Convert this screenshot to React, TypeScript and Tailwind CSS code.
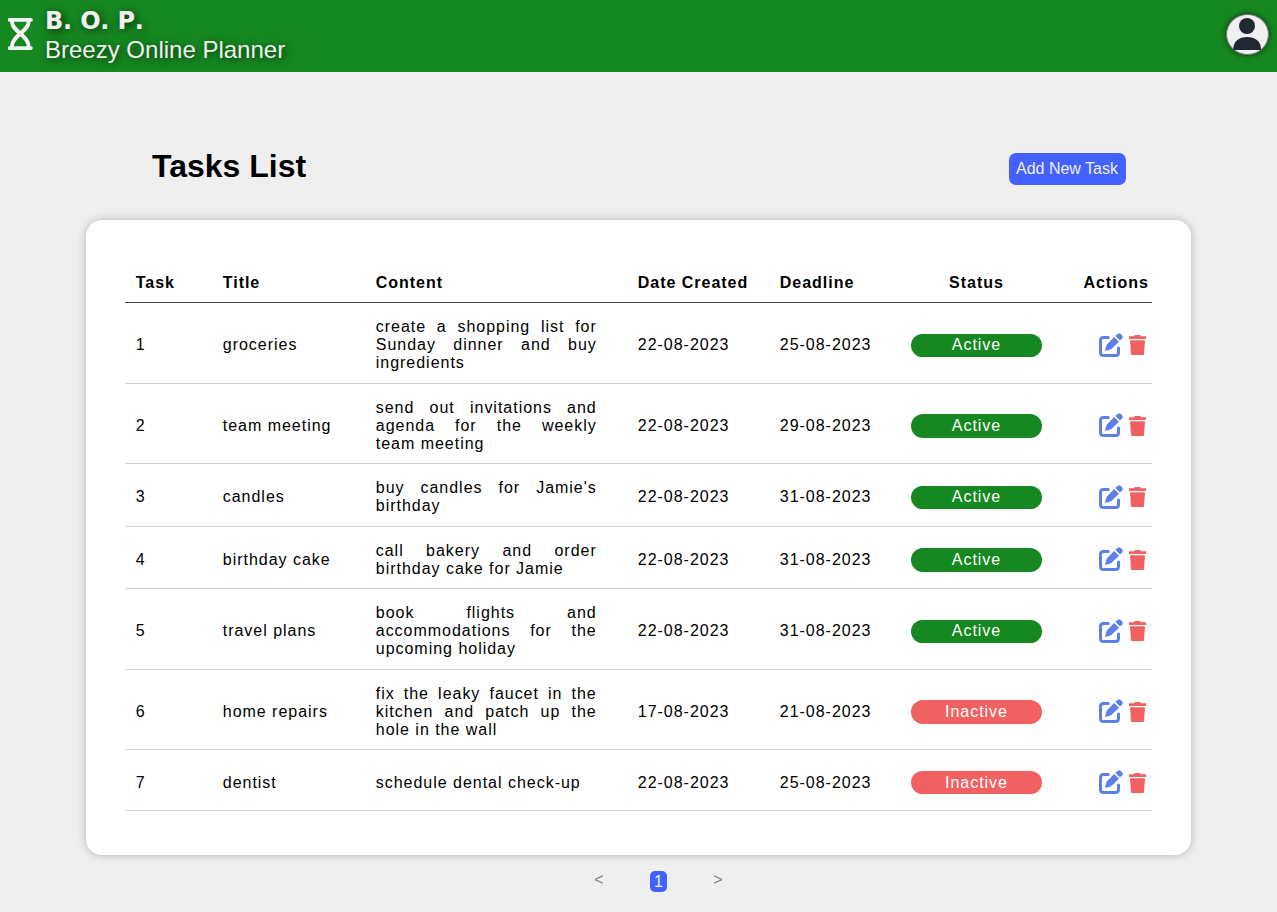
import React from "react";

type Task = {
  id: number;
  title: string;
  content: string;
  created: string;
  deadline: string;
  active: boolean;
  row: string;
  pill: string;
  actions: string;
  trash: string;
};

const odd = { pill: "mt-[2px] h-[23px] pt-[2px]", actions: "mt-px", trash: "" };
const even = { pill: "mt-px h-[24px] pt-[3px]", actions: "mt-[-1px]", trash: "mt-px mb-[-1px]" };
const last = { pill: "mt-[-1px] h-[23px] pt-[3px]", actions: "mt-[-2px]", trash: "mt-px mb-[-1px]" };

const tasks: Task[] = [
  { id: 1, title: "groceries", content: "create a shopping list for Sunday dinner and buy ingredients", created: "22-08-2023", deadline: "25-08-2023", active: true, row: "h-[81px] pt-[3px]", ...odd },
  { id: 2, title: "team meeting", content: "send out invitations and agenda for the weekly team meeting", created: "22-08-2023", deadline: "29-08-2023", active: true, row: "h-[80px] pt-[4px]", ...even },
  { id: 3, title: "candles", content: "buy candles for Jamie's birthday", created: "22-08-2023", deadline: "31-08-2023", active: true, row: "h-[63px] pt-[3px]", ...odd },
  { id: 4, title: "birthday cake", content: "call bakery and order birthday cake for Jamie", created: "22-08-2023", deadline: "31-08-2023", active: true, row: "h-[62px] pt-[4px]", ...even },
  { id: 5, title: "travel plans", content: "book flights and accommodations for the upcoming holiday", created: "22-08-2023", deadline: "31-08-2023", active: true, row: "h-[81px] pt-[3px]", ...odd },
  { id: 6, title: "home repairs", content: "fix the leaky faucet in the kitchen and patch up the hole in the wall", created: "17-08-2023", deadline: "21-08-2023", active: false, row: "h-[80px] pt-[4px]", ...even },
  { id: 7, title: "dentist", content: "schedule dental check-up", created: "22-08-2023", deadline: "25-08-2023", active: false, row: "h-[61px] pt-[6px]", ...last },
];

const columns = "grid grid-cols-[87px_153px_262px_142px_131.25px_131px_110px] pl-[10.75px]";

function HourglassIcon() {
  return (
    <svg viewBox="0 0 25 32" className="mt-[-4px] h-8 w-[25px]" fill="none" stroke="#f4f4f4">
      <path d="M1.500 1.900H23M1.500 30.100H23" strokeWidth="3.600" strokeLinecap="round" />
      <path d="M4 2V4C4 13 20.600 18 20.600 28V30M20.600 2V4C20.600 13 4 18 4 28V30" strokeWidth="3.900" />
    </svg>
  );
}

function EditIcon() {
  return (
    <svg viewBox="0 0 24 24" className="size-6" fill="#5c80e8">
      <path d="M9.200 4.500H4.500Q1.500 4.500 1.500 7.500V19.500Q1.500 22.500 4.500 22.500H16.500Q19.500 22.500 19.500 19.500V15" fill="none" stroke="#5c80e8" strokeWidth="3" strokeLinecap="round" />
      <path d="M6 18L7.100 13.200Q7.500 11.700 8.500 10.700L15.200 4L20 8.800L13.200 15.300Q12.200 16.300 10.800 16.700Z" />
      <path d="M16.400 3L18.800 .7Q20.200-.3 21.600 .8L23.200 2.400Q24.300 3.800 23.300 5.200L21 7.600Z" />
    </svg>
  );
}

function TrashIcon({ className }: { className: string }) {
  return (
    <svg viewBox="0 0 17 24" className={`h-6 w-[17px] ${className}`} fill="#f16161">
      <path d="M0 3.200H5L5.700 2H11.300L12 3.200H17V6H0Z" />
      <path d="M1 7.200H16L15 21Q14.900 22 14 22H3Q2.100 22 2 21Z" />
    </svg>
  );
}

function Header() {
  return (
    <header className="flex h-[72px] items-center justify-between bg-[#168821] px-2 text-[#efefef]">
      <div className="flex items-center">
        <HourglassIcon />
        <div className="ml-[12px] [text-shadow:2px_2px_8px_#000000b0]">
          <div className="h-[28px] pt-px font-['DejaVu_Sans',sans-serif] text-[24px] leading-[28px] font-bold tracking-[-0.2px] [font-kerning:none]">B. O. P.</div>
          <div className="h-[32px] text-[24px] leading-[32px]">Breezy Online Planner</div>
        </div>
      </div>
      <div className="mt-[-3px] h-[41px] w-[43px] rounded-[50%] border border-[#777] bg-[#efefef] shadow-[0_0_6px_#000000a0]">
        <svg viewBox="0 0 41 39" className="h-[39px] w-[41px]" fill="#212831">
          <circle cx="20" cy="11" r="8" />
          <path d="M6.300 35V33.500C6.800 26 12 22 20.100 22S33.500 26 34 33.500V35Z" />
        </svg>
      </div>
    </header>
  );
}

function Row({ task }: { task: Task }) {
  return (
    <div className={`${columns} ${task.row} items-center border-b border-[#d0d3d4]`}>
      <span>{task.id}</span>
      <span>{task.title}</span>
      <p className="w-[221px] text-justify">{task.content}</p>
      <span>{task.created}</span>
      <span>{task.deadline}</span>
      <span className={`rounded-full text-center text-white ${task.pill} ${task.active ? "bg-[#168821]" : "bg-[#f16161]"}`}>
        {task.active ? "Active" : "Inactive"}
      </span>
      <div className={`flex h-6 items-start justify-end gap-[6px] pr-[6px] ${task.actions}`}>
        <EditIcon />
        <TrashIcon className={task.trash} />
      </div>
    </div>
  );
}

export default function App() {
  return (
    <div className="h-[912px] overflow-hidden bg-[#efefef] font-['Liberation_Sans',sans-serif] text-base text-black">
      <Header />
      <main className="flex flex-col px-[86px]">
        <div className="flex h-[148px] items-start justify-between pr-[65px] pl-[66px]">
          <h1 className="pt-[76px] text-[32px] leading-[37px] font-bold">Tasks List</h1>
          <button className="mt-[81px] h-8 w-[117px] rounded-[7px] bg-[#4361ff] pr-px text-[#efefef]">Add New Task</button>
        </div>
        <section className="h-[635px] rounded-[16px] bg-white px-[39px] pt-[40px] leading-[18px] tracking-[0.98px] shadow-[0_0_10px_#00000040]">
          <div className={`${columns} h-[43px] items-center border-b border-[#444] pt-[4px] font-bold`}>
            <span>Task</span>
            <span>Title</span>
            <span>Content</span>
            <span>Date Created</span>
            <span>Deadline</span>
            <span className="text-center">Status</span>
            <span className="pr-[3px] text-right">Actions</span>
          </div>
          {tasks.map((task) => (
            <Row key={task.id} task={task} />
          ))}
        </section>
        <nav className="flex items-start pt-[16px] pl-[508px] text-[#808080]">
          <button className="w-[10px] pt-px leading-[16px]">&lt;</button>
          <button className="mx-[46px] h-[21px] w-[17px] rounded-[5px] bg-[#4361ff] leading-[21px] text-[#efefef]">1</button>
          <button className="w-[10px] pt-px leading-[16px]">&gt;</button>
        </nav>
      </main>
    </div>
  );
}
